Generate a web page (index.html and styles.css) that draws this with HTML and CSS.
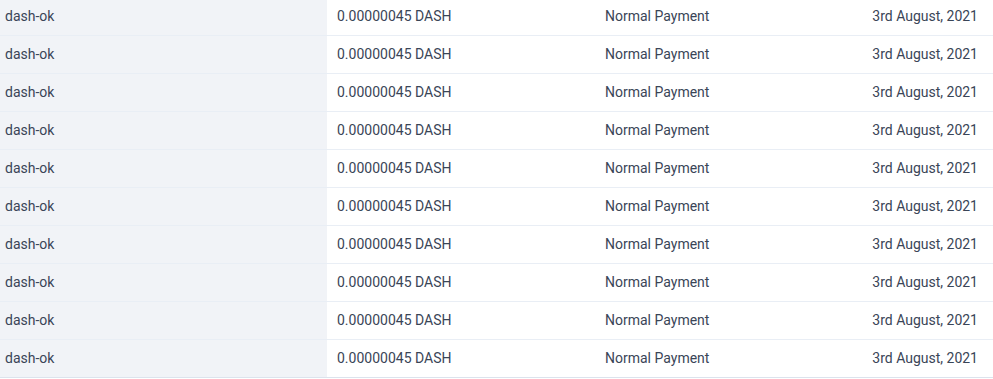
FILE: index.html
```html
<!DOCTYPE html>
<html>
<head>
<meta charset="utf-8">
<link rel="stylesheet" href="styles.css">
</head>
<body>
<div class="table">
  <div class="row"><div class="cell name">dash-ok</div><div class="cell">0.00000045 DASH</div><div class="cell">Normal Payment</div><div class="cell date">3rd August, 2021</div></div>
  <div class="row"><div class="cell name">dash-ok</div><div class="cell">0.00000045 DASH</div><div class="cell">Normal Payment</div><div class="cell date">3rd August, 2021</div></div>
  <div class="row"><div class="cell name">dash-ok</div><div class="cell">0.00000045 DASH</div><div class="cell">Normal Payment</div><div class="cell date">3rd August, 2021</div></div>
  <div class="row"><div class="cell name">dash-ok</div><div class="cell">0.00000045 DASH</div><div class="cell">Normal Payment</div><div class="cell date">3rd August, 2021</div></div>
  <div class="row"><div class="cell name">dash-ok</div><div class="cell">0.00000045 DASH</div><div class="cell">Normal Payment</div><div class="cell date">3rd August, 2021</div></div>
  <div class="row"><div class="cell name">dash-ok</div><div class="cell">0.00000045 DASH</div><div class="cell">Normal Payment</div><div class="cell date">3rd August, 2021</div></div>
  <div class="row"><div class="cell name">dash-ok</div><div class="cell">0.00000045 DASH</div><div class="cell">Normal Payment</div><div class="cell date">3rd August, 2021</div></div>
  <div class="row"><div class="cell name">dash-ok</div><div class="cell">0.00000045 DASH</div><div class="cell">Normal Payment</div><div class="cell date">3rd August, 2021</div></div>
  <div class="row"><div class="cell name">dash-ok</div><div class="cell">0.00000045 DASH</div><div class="cell">Normal Payment</div><div class="cell date">3rd August, 2021</div></div>
  <div class="row last"><div class="cell name">dash-ok</div><div class="cell">0.00000045 DASH</div><div class="cell">Normal Payment</div><div class="cell date">3rd August, 2021</div></div>
</div>
</body>
</html>
```
FILE: styles.css
```css
html, body {
  margin: 0;
  padding: 0;
  background: #ffffff;
  overflow: hidden;
}
.table {
  margin-top: -2px;
  font-family: Roboto, "Liberation Sans", sans-serif;
  font-size: 14px;
  color: #3a4557;
}
.row {
  display: grid;
  grid-template-columns: 327px 268px 1fr auto;
  height: 37px;
  border-bottom: 1px solid #e9eef5;
}
.row.last {
  border-bottom-color: #dce3ed;
}
.cell {
  display: flex;
  align-items: center;
  padding-left: 10px;
  padding-bottom: 2px;
  white-space: nowrap;
}
.cell.name {
  background: #f1f3f7;
  padding-left: 5px;
}
.cell.date {
  padding-left: 0;
  padding-right: 15px;
  justify-content: flex-end;
}
```
